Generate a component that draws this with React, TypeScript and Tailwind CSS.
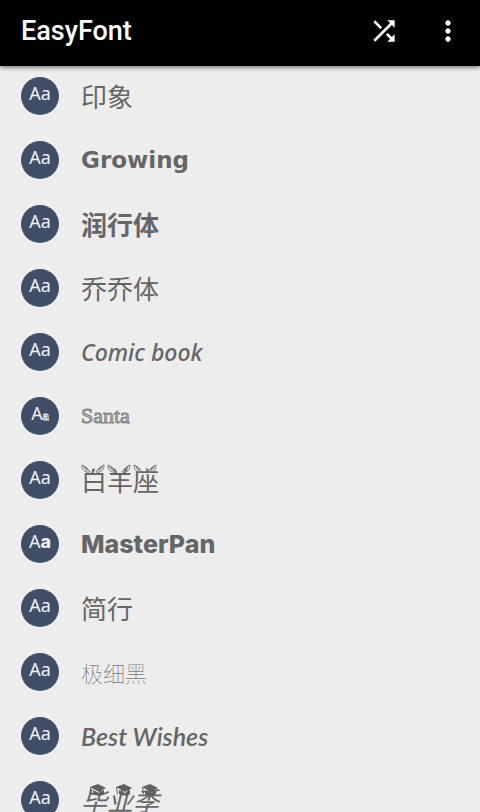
import type { ReactNode } from "react";

type FontRow = {
  name: string;
  style: string;
  letter?: string;
  ornament?: "horns" | "cap";
};

const badgeLetter = "font-['Noto_Sans']";

const fonts: FontRow[] = [
  { name: "印象", style: "font-['Noto_Sans_CJK_SC',sans-serif] text-[26px] font-normal" },
  { name: "Growing", style: "font-['DejaVu_Sans',sans-serif] text-[23px] font-bold" },
  { name: "润行体", style: "font-['Noto_Sans_CJK_SC',sans-serif] text-[26px] font-bold" },
  { name: "乔乔体", style: "font-['Noto_Sans_CJK_SC',sans-serif] text-[26px] font-normal" },
  { name: "Comic book", style: "font-['Noto_Sans',sans-serif] text-[23px] font-medium italic" },
  {
    name: "Santa",
    style: "font-['Liberation_Serif',serif] text-[22px] font-normal text-[#b5b5b5] [-webkit-text-stroke:1px_#858585]",
    letter: "font-['Liberation_Serif',serif] text-xs font-bold text-transparent [-webkit-text-stroke:1px_#dfe3ea]",
  },
  { name: "白羊座", style: "font-['Noto_Sans_CJK_SC',sans-serif] text-[26px] font-normal", ornament: "horns" },
  {
    name: "MasterPan",
    style: "font-['Inter',sans-serif] text-[25px] font-extrabold",
    letter: "font-['Inter',sans-serif] font-extrabold",
  },
  { name: "简行", style: "font-['Noto_Sans_CJK_SC',sans-serif] text-[26px] font-normal" },
  { name: "极细黑", style: "font-['Noto_Sans_CJK_SC',sans-serif] text-[22px] font-thin text-[#777]" },
  { name: "Best Wishes", style: "font-['Lato',sans-serif] text-[25px] font-semibold italic" },
  { name: "毕业季", style: "font-['Noto_Sans_CJK_SC',sans-serif] text-[26px] font-normal italic", ornament: "cap" },
];

function Horns() {
  return (
    <svg viewBox="0 0 24 10" className="h-[10px] w-6" fill="none" stroke="#777" strokeWidth="1">
      <path d="M9 8C4 9 1 6 1 1c2 1 6 3 8 7M3 3l3 4M2 1l5 5" />
      <path d="M15 8c5 1 8-2 8-7-2 1-6 3-8 7M21 3l-3 4M22 1l-5 5" />
    </svg>
  );
}

function GradCap() {
  return (
    <svg viewBox="0 0 18 13" className="ml-2 h-[13px] w-[18px]" fill="#606060">
      <path d="M1 3L9 0l8 4-7 4z" />
      <path d="M4 6l6 3 5-3v4c-3 2-8 2-11 0z" />
      <path d="M1 3h1l1 7H2z" />
    </svg>
  );
}

function Ornaments({ count, children }: { count: number; children: ReactNode }) {
  return (
    <span aria-hidden="true" className="absolute top-0 left-0 flex">
      {Array.from({ length: count }, (_, i) => (
        <span key={i} className="w-[26px] shrink-0">{children}</span>
      ))}
    </span>
  );
}

function Row({ font }: { font: FontRow }) {
  return (
    <li>
      <button type="button" className="flex w-full items-center gap-[22px] text-left">
        <span
          aria-hidden="true"
          className="flex size-[38px] shrink-0 items-baseline justify-center rounded-full bg-[#404e68] pt-1 font-['Noto_Sans',sans-serif] text-lg leading-6 text-[#eef0f4]"
        >
          A<span className={font.letter ?? badgeLetter}>a</span>
        </span>
        <span className={"relative whitespace-nowrap leading-8 " + font.style}>
          {font.name}
          {font.ornament && (
            <Ornaments count={font.name.length}>
              {font.ornament === "horns" ? <Horns /> : <GradCap />}
            </Ornaments>
          )}
        </span>
      </button>
    </li>
  );
}

export default function App() {
  return (
    <div className="flex h-screen flex-col overflow-hidden bg-[#ededed] font-['Roboto',sans-serif] text-[#666]">
      <header className="z-10 flex h-[66px] shrink-0 items-center bg-black pr-5 pb-1 pl-[21px] text-white shadow-[0_1px_5px_rgba(0,0,0,0.6)]">
        <h1 className="flex-1 text-[27px] font-medium">EasyFont</h1>
        <button type="button" aria-label="Shuffle" className="mr-9">
          <svg viewBox="0 0 24 24" className="size-8" fill="currentColor">
            <path d="M10.59 9.17L5.41 4 4 5.41l5.17 5.17 1.42-1.41zM14.5 4l2.04 2.04L4 18.59 5.41 20 17.96 7.46 20 9.5V4h-5.5zm.33 9.41l-1.41 1.41 3.13 3.13L14.5 20H20v-5.5l-2.04 2.04-3.13-3.13z" />
          </svg>
        </button>
        <button type="button" aria-label="More options">
          <svg viewBox="0 0 24 24" className="-mx-1 size-8" fill="currentColor">
            <path d="M12 8c1.1 0 2-.9 2-2s-.9-2-2-2-2 .9-2 2 .9 2 2 2zm0 2c-1.1 0-2 .9-2 2s.9 2 2 2 2-.9 2-2-.9-2-2-2zm0 6c-1.1 0-2 .9-2 2s.9 2 2 2 2-.9 2-2-.9-2-2-2z" />
          </svg>
        </button>
      </header>
      <main className="min-h-0 flex-1 overflow-hidden px-[21px] pt-[11px]">
        <ul className="flex flex-col gap-[26px]">
          {fonts.map((font) => (
            <Row key={font.name} font={font} />
          ))}
        </ul>
      </main>
    </div>
  );
}
